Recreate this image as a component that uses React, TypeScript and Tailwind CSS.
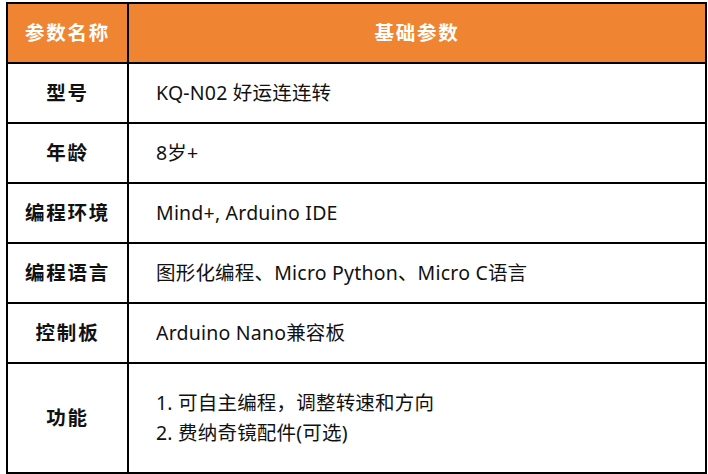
const rows: { label: string; value: string[] }[] = [
  { label: "型号", value: ["KQ-N02 好运连连转"] },
  { label: "年龄", value: ["8岁+"] },
  { label: "编程环境", value: ["Mind+, Arduino IDE"] },
  { label: "编程语言", value: ["图形化编程、Micro Python、Micro C语言"] },
  { label: "控制板", value: ["Arduino Nano兼容板"] },
  { label: "功能", value: ["1. 可自主编程，调整转速和方向", "2. 费纳奇镜配件(可选)"] },
];

export default function App() {
  return (
    <div
      className="w-[708px] h-[474px] bg-white pt-[2px] pl-[6px]"
      style={{ fontFamily: '"Noto Sans", "Noto Sans CJK SC", sans-serif' }}
    >
      <div className="w-[701px] border-2 border-black">
        {/* header */}
        <div className="flex h-[58px] bg-[#EF8432] text-white font-bold text-[19.5px]">
          <div className="w-[121px] flex items-center justify-center border-r-2 border-black tracking-[1.8px]">
            参数名称
          </div>
          <div className="flex-1 flex items-center justify-center tracking-[1.8px]">基础参数</div>
        </div>

        {rows.map((row, i) => (
          <div
            key={row.label}
            className={`flex border-t-2 border-black text-[19.5px] text-[#111] ${
              i === rows.length - 1 ? "h-[110px]" : "h-[60px]"
            }`}
          >
            <div className="w-[121px] flex items-center justify-center border-r-2 border-black font-bold tracking-[1.8px]">
              {row.label}
            </div>
            <div className="flex-1 flex flex-col justify-center pl-[27px] leading-[30px] tracking-[0.2px]">
              {row.value.map((v) => (
                <div key={v}>{v}</div>
              ))}
            </div>
          </div>
        ))}
      </div>
    </div>
  );
}
